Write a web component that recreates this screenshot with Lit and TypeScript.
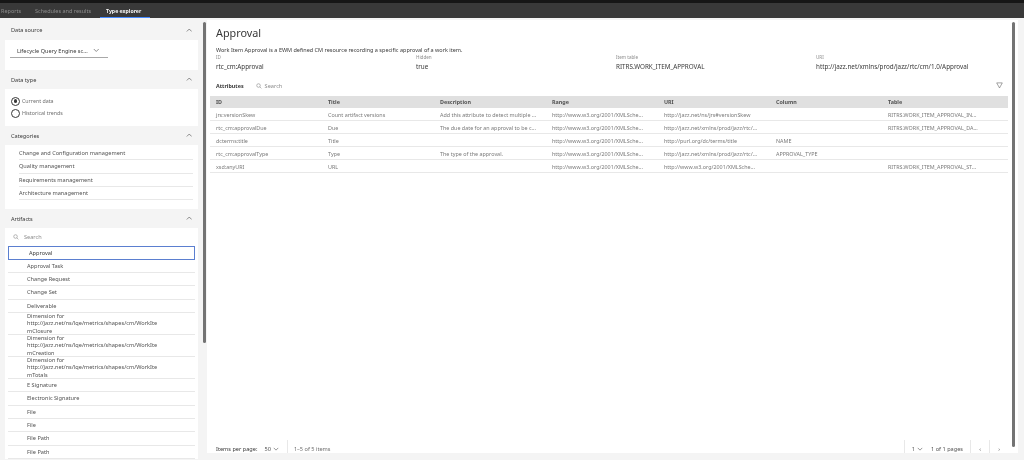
import { LitElement, html, css } from "lit";
import { customElement } from "lit/decorators.js";

const chevUp = html`<svg class="chev" viewBox="0 0 8 8"><path d="M1 5.5 4 2.5 7 5.5" fill="none" stroke="#525252" stroke-width=".8"/></svg>`;
const chevDown = html`<svg class="chev" viewBox="0 0 8 8"><path d="M1 2.5 4 5.5 7 2.5" fill="none" stroke="#525252" stroke-width=".8"/></svg>`;
const search = html`<svg class="search" viewBox="0 0 10 10"><circle cx="4.2" cy="4.2" r="3" fill="none" stroke="#6f6f6f" stroke-width=".8"/><path d="M6.4 6.4 9 9" stroke="#6f6f6f" stroke-width=".8"/></svg>`;

const rows = [
  ["jrs:versionSkew","Count artifact versions","Add this attribute to detect multiple ...","http://www.w3.org/2001/XMLSche...","http://jazz.net/ns/jrs#versionSkew","","RITRS.WORK_ITEM_APPROVAL_IN..."],
  ["rtc_cm:approvalDue","Due","The due date for an approval to be c...","http://www.w3.org/2001/XMLSche...","http://jazz.net/xmlns/prod/jazz/rtc/...","","RITRS.WORK_ITEM_APPROVAL_DA..."],
  ["dcterms:title","Title","","http://www.w3.org/2001/XMLSche...","http://purl.org/dc/terms/title","NAME",""],
  ["rtc_cm:approvalType","Type","The type of the approval.","http://www.w3.org/2001/XMLSche...","http://jazz.net/xmlns/prod/jazz/rtc/...","APPROVAL_TYPE",""],
  ["xsd:anyURI","URL","","http://www.w3.org/2001/XMLSche...","http://www.w3.org/2001/XMLSche...","","RITRS.WORK_ITEM_APPROVAL_ST..."],
];
const cols = ["ID","Title","Description","Range","URI","Column","Table"];
const cats = ["Change and Configuration management","Quality management","Requirements management","Architecture management"];
const artsA = ["Approval Task","Change Request","Change Set","Deliverable"];
const dims = ["mClosure","mCreation","mTotals"];
const artsB = ["E Signature","Electronic Signature","File","File","File Path","File Path"];

@customElement("app-root")
export class AppRoot extends LitElement {
  static styles = css`
    :host { display: block; width: 1024px; height: 460px; overflow: hidden; background: #f4f4f4; font-family: "Noto Sans", sans-serif; color: #525252; font-size: 5.6px; filter: blur(.3px); }
    .top { height: 18px; background: #393939; border-top: 3px solid #161616; box-sizing: border-box; display: flex; padding-left: 1px; color: #8d8d8d; font-size: 5.5px; }
    .tab { line-height: 16px; height: 15px; box-sizing: border-box; }
    .t1 { width: 34px; }
    .t2 { width: 65px; }
    .tab.on { color: #f4f4f4; font-weight: 700; border-bottom: 1px solid #4589ff; padding-left: 6px; width: 50px; font-size: 5.2px; }
    .main { display: flex; height: 442px; }
    .left { width: 203px; padding-left: 5px; box-sizing: border-box; flex: none; overflow: hidden; }
    .left-inner { width: 193px; }
    .sb { width: 3px; flex: none; }
    .thumb { width: 3px; background: #737373; height: 321px; margin-top: 4px; border-radius: 2px; }
    .head { display: flex; justify-content: space-between; align-items: center; height: 19px; padding: 0 6px; color: #393939; font-size: 5.6px; }
    .head.first { height: 22px; padding-top: 2px; box-sizing: border-box; }
    .chev { width: 6.5px; height: 6.5px; }
    .body { background: #fff; }
    .b1 { height: 30px; padding: 4px 5px 0; box-sizing: border-box; }
    .select { width: 98px; height: 14px; border-bottom: 1px solid #a8a8a8; display: flex; align-items: center; padding-left: 7px; box-sizing: border-box; gap: 5px; color: #393939; }
    .b2 { height: 37px; padding: 6px 6px 0; box-sizing: border-box; }
    .radio { display: flex; align-items: center; gap: 2px; height: 12px; color: #6f6f6f; font-size: 5.3px; }
    .dot { width: 7px; height: 7px; border-radius: 50%; border: .6px solid #393939; display: grid; place-items: center; }
    .dot i { width: 3.5px; height: 3.5px; background: #393939; border-radius: 50%; }
    .b3 { height: 64px; padding: 2px 5px 0 14px; box-sizing: border-box; }
    .row { height: 13.3px; line-height: 13px; border-bottom: .6px solid #e8e8e8; box-sizing: border-box; }
    .b4 { padding: 0 3px; }
    .sr { height: 18px; display: flex; align-items: center; gap: 5px; padding-left: 5px; color: #8d8d8d; }
    .search { width: 6px; height: 6px; flex: none; }
    .picked { height: 13.5px; line-height: 12px; border: 1px solid #5b7fd0; padding-left: 20px; box-sizing: border-box; color: #393939; }
    .art { height: 13.4px; line-height: 13px; padding-left: 19px; border-bottom: .6px solid #e8e8e8; box-sizing: border-box; }
    .dim { height: 21.9px; line-height: 7.35px; padding-left: 19px; border-bottom: .6px solid #e8e8e8; box-sizing: border-box; }
    .right { width: 811px; margin-left: 1px; flex: none; background: #fff; margin-top: 2px; display: flex; height: 433px; }
    .col { width: 805px; display: flex; flex-direction: column; flex: none; }
    .rsb { width: 3px; height: 425px; margin-top: 2px; background: #737373; border-radius: 2px; flex: none; }
    .content { flex: 1; padding-left: 3px; }
    h1 { margin: 0 0 0 6px; font-size: 10.8px; font-weight: 400; line-height: 26px; color: #393939; }
    .desc { margin-left: 6px; line-height: 8px; font-size: 5.5px; color: #393939; height: 9px; }
    .meta { display: grid; grid-template-columns: 200px 200px 200px 1fr; margin-left: 6px; }
    .lab { font-size: 4.6px; line-height: 5px; color: #8d8d8d; }
    .val { font-size: 6.3px; line-height: 14px; color: #393939; }
    .bar { display: flex; align-items: center; height: 15px; margin-top: 4px; padding-left: 6px; gap: 12px; margin-right: 9px; }
    .bar b { color: #393939; font-size: 5.4px; }
    .bar .s { display: flex; gap: 3px; align-items: center; color: #8d8d8d; flex: 1; }
    .filter { width: 7px; height: 7px; }
    table { border-collapse: collapse; table-layout: fixed; width: 798px; margin-top: 3px; }
    th { background: #e0e0e0; height: 12px; width: 112px; box-sizing: border-box; padding: 0 0 0 6px; text-align: left; font-weight: 700; color: #525252; font-size: 5.4px; }
    th:last-child { width: auto; }
    td { height: 11px; padding: 1px 0 0 6px; color: #7a7a7a; border-bottom: .6px solid #e8e8e8; white-space: nowrap; overflow: hidden; font-size: 5.4px; }
    .foot { height: 13px; display: flex; align-items: stretch; padding-left: 9px; margin-right: 4px; }
    .foot b, .foot .pp, .foot .cnt, .foot .pg { display: flex; align-items: center; padding-top: 5px; box-sizing: border-box; }
    .foot b { font-weight: 400; color: #393939; }
    .pp { gap: 2px; margin-left: 7px; padding-right: 8px; border-right: .6px solid #e8e8e8; }
    .foot .cnt { margin-left: 6px; flex: 1; color: #6f6f6f; }
    .foot .pg { border-left: .6px solid #e8e8e8; padding-left: 7px; padding-right: 7px; gap: 2px; }
    .foot .pg.n { width: 19px; justify-content: center; padding-left: 0; padding-right: 0; }
    .pages { margin-left: 6px; }
    .foot .chev { width: 6px; height: 6px; }
  `;
  render() {
    return html`
      <div class="top"><div class="tab t1">Reports</div><div class="tab t2">Schedules and results</div><div class="tab on">Type explorer</div></div>
      <div class="main">
        <div class="left"><div class="left-inner">
          <div class="head first">Data source ${chevUp}</div>
          <div class="body b1"><div class="select">Lifecycle Query Engine sc... ${chevDown}</div></div>
          <div class="head">Data type ${chevUp}</div>
          <div class="body b2">
            <div class="radio"><span class="dot"><i></i></span>Current data</div>
            <div class="radio"><span class="dot"></span>Historical trends</div>
          </div>
          <div class="head">Categories ${chevUp}</div>
          <div class="body b3">${cats.map(c => html`<div class="row">${c}</div>`)}</div>
          <div class="head">Artifacts ${chevUp}</div>
          <div class="body b4">
            <div class="sr">${search}Search</div>
            <div class="picked">Approval</div>
            ${artsA.map(c => html`<div class="art">${c}</div>`)}
            ${dims.map(d => html`<div class="dim">Dimension for<br>http://jazz.net/ns/lqe/metrics/shapes/cm/WorkIte<br>${d}</div>`)}
            ${artsB.map(c => html`<div class="art">${c}</div>`)}
          </div>
        </div></div>
        <div class="sb"><div class="thumb"></div></div>
        <div class="right">
          <div class="col">
          <div class="content">
            <h1>Approval</h1>
            <div class="desc">Work Item Approval is a EWM defined CM resource recording a specific approval of a work item.</div>
            <div class="meta">
              <div><div class="lab">ID</div><div class="val">rtc_cm:Approval</div></div>
              <div><div class="lab">Hidden</div><div class="val">true</div></div>
              <div><div class="lab">Item table</div><div class="val">RITRS.WORK_ITEM_APPROVAL</div></div>
              <div><div class="lab">URI</div><div class="val">http://jazz.net/xmlns/prod/jazz/rtc/cm/1.0/Approval</div></div>
            </div>
            <div class="bar"><b>Attributes</b><div class="s">${search}Search</div>
              <svg class="filter" viewBox="0 0 8 8"><path d="M.8 1H7.2L4 6.8Z" fill="none" stroke="#525252" stroke-width=".6"/></svg></div>
            <table><thead><tr>${cols.map(c => html`<th>${c}</th>`)}</tr></thead>
            <tbody>${rows.map(r => html`<tr>${r.map(c => html`<td>${c}</td>`)}</tr>`)}</tbody></table>
          </div>
          <div class="foot">
            <b>Items per page:</b><div class="pp">50 ${chevDown}</div><div class="cnt">1–5 of 5 items</div>
            <div class="pg">1 ${chevDown}<span class="pages">1 of 1 pages</span></div>
            <div class="pg n">‹</div><div class="pg n">›</div>
          </div>
          </div>
          <div class="rsb"></div>
        </div>
      </div>`;
  }
}
